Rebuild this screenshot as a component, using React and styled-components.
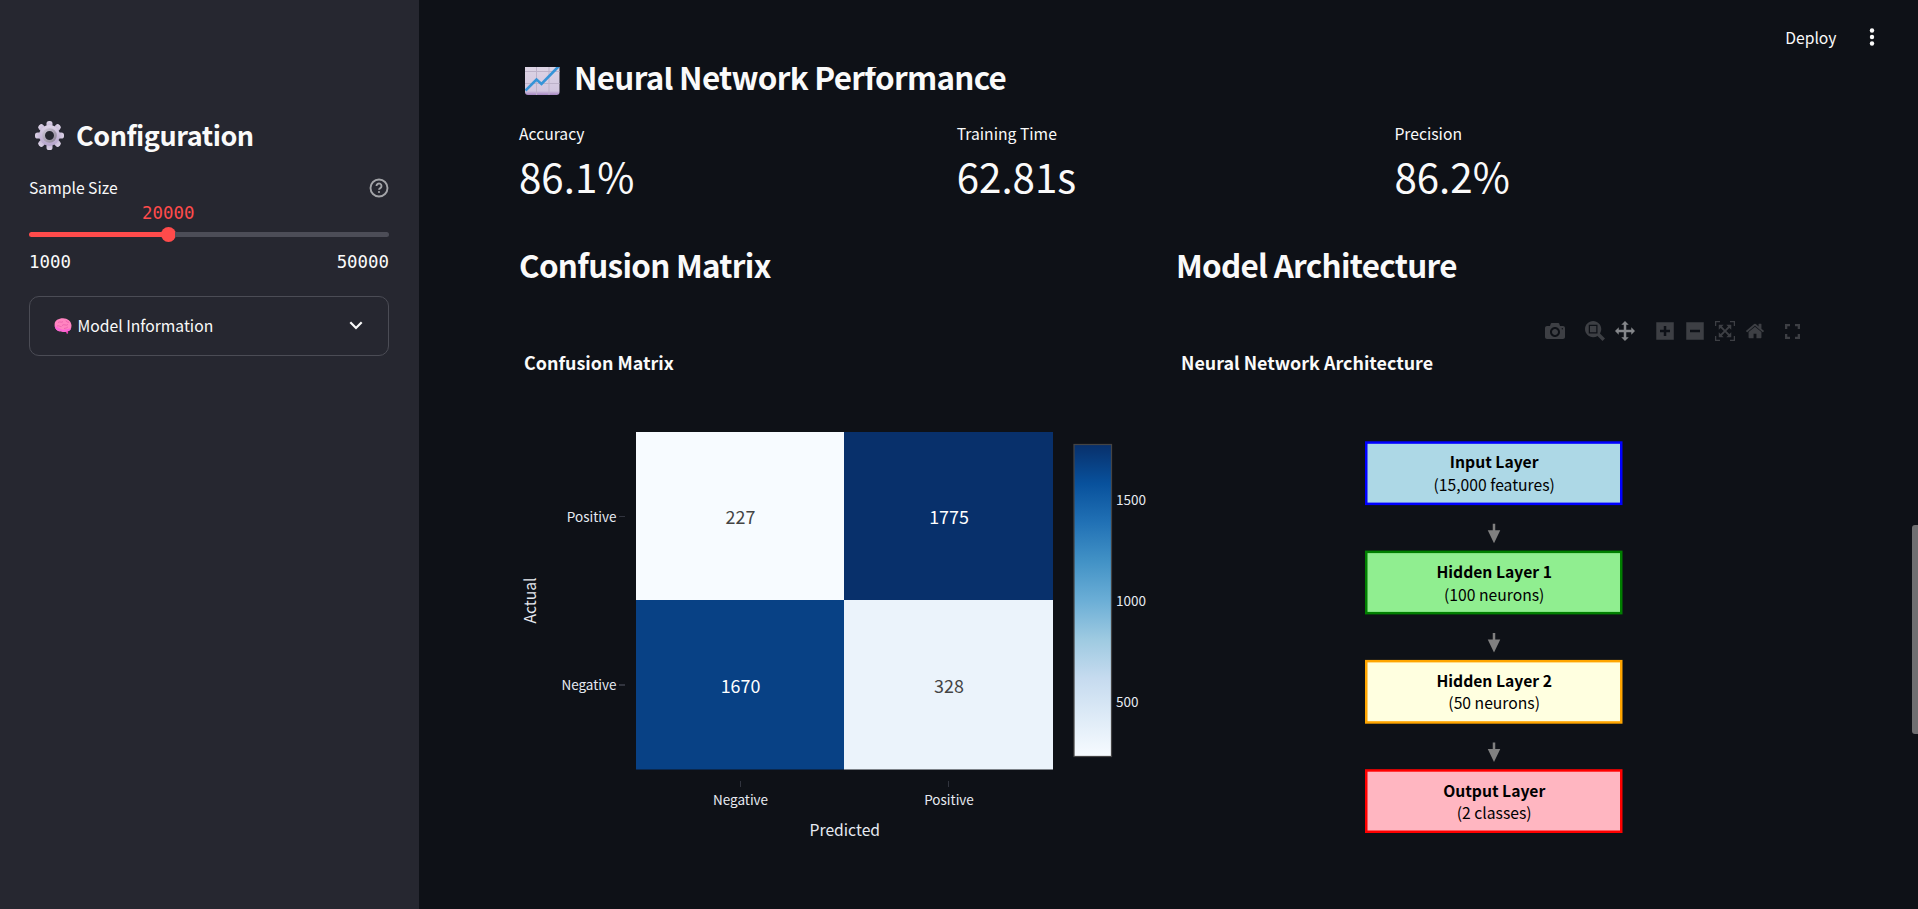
import React from "react";
import styled, { createGlobalStyle } from "styled-components";

const sans = `"Noto Sans CJK SC", "Noto Sans", sans-serif`;
const mono = `"DejaVu Sans Mono", monospace`;

const Global = createGlobalStyle`
  * { box-sizing: border-box; }
  body { margin: 0; background: #0e1117; color: #fafafa; font-family: ${sans}; overflow: hidden; }
  h1, h2, h3, p { margin: 0; }
`;

const Page = styled.div`
  display: flex;
  width: 1918px;
  height: 909px;
  overflow: hidden;
  position: relative;
`;

const Sidebar = styled.aside`
  width: 419px;
  flex: none;
  background: #262730;
  padding: 115px 30px 0 29px;
`;

const SideTitle = styled.h2`
  display: flex;
  align-items: center;
  height: 40px;
  padding-left: 6px;
  gap: 12px;
  font-size: 27px;
  font-weight: 700;
  line-height: 40px;
  letter-spacing: -0.46px;
  white-space: nowrap;
`;

const LabelRow = styled.div`
  display: flex;
  justify-content: space-between;
  align-items: center;
  height: 24px;
  margin-top: 20px;
  font-size: 15.7px;
  svg { margin-top: 1px; }
`;

const Slider = styled.div`
  display: flex;
  align-items: center;
  height: 16px;
  margin-top: 2px;
`;

const SliderValue = styled.div`
  margin: 3px 0 0 113px;
  font: 17.4px/22px ${mono};
  color: #ff4b4b;
`;

const Filled = styled.div`
  width: 133px;
  height: 5px;
  border-radius: 3px 0 0 3px;
  background: #ff4b4b;
`;

const Thumb = styled.div`
  width: 15px;
  height: 15px;
  border-radius: 50%;
  margin: 0 -1px;
  background: #ff4b4b;
`;

const Rest = styled.div`
  flex: 1;
  height: 5px;
  border-radius: 0 3px 3px 0;
  background: #4c4d57;
`;

const Range = styled.div`
  display: flex;
  justify-content: space-between;
  margin-top: 9px;
  font: 17.4px/22px ${mono};
`;

const Expander = styled.div`
  display: flex;
  align-items: center;
  height: 60px;
  margin-top: 23px;
  padding: 0 25.5px 1px 23.5px;
  border: 1px solid #4b4c55;
  border-radius: 10px;
  font-size: 15.7px;
  gap: 6px;
  svg:last-child { margin-left: auto; }
`;

const Header = styled.header`
  position: absolute;
  top: 0;
  left: 419px;
  right: 0;
  height: 67px;
  background: #0e1117;
  display: flex;
  justify-content: flex-end;
  align-items: center;
  gap: 32px;
  padding: 7px 43.5px 0 0;
  font-size: 15.7px;
`;

const Main = styled.main`
  flex: 1;
  padding: 52px 85px 0 100px;
`;

const Heading = styled.h3`
  display: flex;
  align-items: center;
  gap: 14px;
  height: 50px;
  padding-left: ${(p) => (p.$icon ? 6 : 0)}px;
  font-size: 31.4px;
  line-height: 50px;
  font-weight: 700;
  white-space: nowrap;
  letter-spacing: -0.7px;
  svg { margin-top: 2px; }
`;

const Metrics = styled.section`
  display: flex;
  margin-top: 20px;
`;

const Metric = styled.div`
  width: 437.7px;
`;

const MetricLabel = styled.p`
  font-size: 15.7px;
  line-height: 24px;
`;

const MetricValue = styled.p`
  font-size: 40.3px;
  line-height: 56px;
  margin: 2px 0 1px;
`;

const Columns = styled.section`
  display: flex;
  margin-top: 35px;
`;

const Column = styled.div`
  width: 657px;
  flex: none;
`;

const Chart = styled.svg`
  display: block;
  font-family: ${sans};
`;

const MatrixArea = styled.div`
  padding-top: 35px;
`;

const Scrollbar = styled.div`
  position: absolute;
  right: 0;
  top: 525px;
  width: 6px;
  height: 209px;
  border-radius: 3px 0 0 3px;
  background: #6f6f71;
`;

const Gear = () => (
  <svg width="29" height="29" viewBox="-14.5 -14.5 29 29">
    <defs>
      <linearGradient id="gear" x1="0" y1="0" x2="0" y2="1">
        <stop offset="0" stopColor="#dcd3e6" />
        <stop offset="1" stopColor="#b6a4cc" />
      </linearGradient>
      <linearGradient id="ring" x1="0" y1="0" x2="1" y2="1">
        <stop offset="0" stopColor="#c9c2d2" />
        <stop offset="1" stopColor="#8f8698" />
      </linearGradient>
    </defs>
    <g fill="url(#gear)">
      {[0, 45, 90, 135, 180, 225, 270, 315].map((a) => (
        <rect key={a} x="-3" y="-14.5" width="6" height="9" rx="2.6" transform={`rotate(${a})`} />
      ))}
      <circle r="10.4" />
    </g>
    <circle r="5.9" fill="#262730" stroke="url(#ring)" strokeWidth="2.8" />
  </svg>
);

const Brain = () => (
  <svg width="18" height="16" viewBox="0 0 18 16">
    <path d="M11.500 12l1 3.600 1.500.1.300-4z" fill="#e93fb4" />
    <path d="M.6 6.500C.6 2.500 4.500.3 9 .3s8.400 3 8.500 7.200c0 3.500-1.500 5.600-4.300 5.600-1.800 1.200-4.700 1-6.200.1C3.500 13.700.6 11 .6 6.500z" fill="#ff84c0" />
    <path d="M.7 7.500c1.500 2 4 1.500 6 3.500 2.500 1.500 5 0 10.500-.500-.6 1.700-1.900 2.600-4 2.600-1.800 1.200-4.700 1-6.200.1C3.500 13.700.8 11 .7 7.500z" fill="#fb66d4" />
    <path d="M4 4.500c2-1.500 3 .5 5-.8M8 7.500c2-2 4 .8 6-1M3 8c2-.8 3 1 4.500.6M10 10.500c2-.3 3-.6 4-1.800M12 2.500c0 1.500 2 1.500 3 2" fill="none" stroke="#e655a6" strokeWidth=".7" />
  </svg>
);

const Trend = () => (
  <svg width="35" height="34" viewBox="0 0 35 34">
    <defs>
      <linearGradient id="paper" x1="0" y1="0" x2="0" y2="1">
        <stop offset="0" stopColor="#dfd8e6" />
        <stop offset=".88" stopColor="#d2c6df" />
        <stop offset="1" stopColor="#a585c2" />
      </linearGradient>
    </defs>
    <rect width="34.500" height="34" rx="3" fill="url(#paper)" />
    <path d="M11.500 0v34M24 0v34M0 10.500h34.500M0 22.500h34.500" stroke="#bdb2c9" />
    <path d="M.5 29.500L11.500 18.500l5 4.500L34 5" fill="none" stroke="#3694d8" strokeWidth="2.600" />
  </svg>
);

const Help = () => (
  <svg width="20" height="20" viewBox="0 0 20 20" fill="none" stroke="#a3a4a8" strokeWidth="1.900">
    <circle cx="10" cy="10" r="8.500" />
    <path d="M7.500 8a2.500 2.500 0 1 1 3.800 2.100c-.9.55-1.300.9-1.300 1.700" />
    <circle cx="10" cy="14" r="1.100" fill="#a3a4a8" stroke="none" />
  </svg>
);

const blues = [
  "rgb(247,251,255)", "rgb(222,235,247)", "rgb(198,219,239)", "rgb(158,202,225)", "rgb(107,174,214)",
  "rgb(66,146,198)", "rgb(33,113,181)", "rgb(8,81,156)", "rgb(8,48,107)",
];

const cells = [
  { x: 117, y: 107, w: 208, h: 168, fill: "rgb(247,251,255)", value: 227, ink: "#444" },
  { x: 325, y: 107, w: 209, h: 168, fill: "rgb(8,48,107)", value: 1775, ink: "#fff" },
  { x: 117, y: 275, w: 208, h: 169.500, fill: "rgb(8,65,133)", value: 1670, ink: "#fff" },
  { x: 325, y: 275, w: 209, h: 169.500, fill: "rgb(235,243,251)", value: 328, ink: "#444" },
];

const Matrix = () => (
  <Chart width="657" height="584" viewBox="0 0 657 584" fill="#e6eaf1">
    <defs>
      <linearGradient id="blues" x1="0" y1="1" x2="0" y2="0">
        {blues.map((c, i) => <stop key={c} offset={i / 8} stopColor={c} />)}
      </linearGradient>
    </defs>
    <text x="5" y="45" fontSize="17.9" fontWeight="700" fill="#fafafa">Confusion Matrix</text>
    {cells.map((c) => (
      <g key={c.value}>
        <rect x={c.x} y={c.y} width={c.w} height={c.h} fill={c.fill} />
        <text x={c.x < 200 ? 221.500 : 430} y={c.y < 200 ? 199 : 368} fontSize="17.9" textAnchor="middle" fill={c.ink}>{c.value}</text>
      </g>
    ))}
    <g fontSize="13.5">
      <text x="97.500" y="197" textAnchor="end">Positive</text>
      <text x="97.500" y="365" textAnchor="end">Negative</text>
      <text x="221.500" y="480" textAnchor="middle">Negative</text>
      <text x="430" y="480" textAnchor="middle">Positive</text>
      <text x="597" y="180">1500</text>
      <text x="597" y="281">1000</text>
      <text x="597" y="382">500</text>
    </g>
    <path d="M100 191.500h6M221.500 456v6M429.500 456v6" stroke="#31343e" />
    <path d="M100 360h6" stroke="#31343e" strokeWidth="2" />
    <text x="325.800" y="511" fontSize="15.700" textAnchor="middle">Predicted</text>
    <text transform="translate(17 275.500) rotate(-90)" fontSize="15.700" textAnchor="middle">Actual</text>
    <rect x="555" y="119.500" width="37.500" height="312" fill="url(#blues)" stroke="#444" strokeWidth="1.250" />
  </Chart>
);

const layers = [
  { name: "Input Layer", size: "(15,000 features)", fill: "lightblue", line: "blue", base: 27, sub: 50 },
  { name: "Hidden Layer 1", size: "(100 neurons)", fill: "lightgreen", line: "green", base: 27.4, sub: 50.4 },
  { name: "Hidden Layer 2", size: "(50 neurons)", fill: "lightyellow", line: "orange", base: 27.1, sub: 49.5 },
  { name: "Output Layer", size: "(2 classes)", fill: "lightpink", line: "red", base: 27.8, sub: 49.8 },
];

const Network = () => (
  <Chart width="657" height="530" viewBox="0 0 657 530">
    <text x="5" y="15" fontSize="17.9" fontWeight="700" fill="#fafafa">Neural Network Architecture</text>
    {layers.map((l, i) => (
      <g key={l.name} transform={`translate(0 ${86.300 + i * 109.300})`} fontSize="15.700" textAnchor="middle">
        <rect x="190.250" y="1.250" width="255" height="61.300" fill={l.fill} stroke={l.line} strokeWidth="2.500" />
        <text x="318.200" y={l.base} fontWeight="700">{l.name}</text>
        <text x="318.200" y={l.sub}>{l.size}</text>
        {i < 3 && <path d="M316.750 82.500h2.500v6.500h5L318 102l-6.250-13h5z" fill="#808080" />}
      </g>
    ))}
  </Chart>
);

const Modebar = styled.div`
  display: flex;
  justify-content: flex-end;
  height: 65px;
  padding: 31px 30px 0 0;
`;

const ToolGroup = styled.div`
  display: flex;
  gap: 10px;
  margin-left: ${(p) => p.$lead ?? 20}px;
`;

const Tool = styled.svg`
  width: 20px;
  height: 20px;
  fill: ${(p) => (p.$active ? "#84868a" : "#3d3f44")};
`;

const tools = [
  [{ w: 1000, d: "m500 450c-83 0-150-67-150-150 0-83 67-150 150-150 83 0 150 67 150 150 0 83-67 150-150 150z m400 150h-120c-16 0-34 13-39 29l-31 93c-6 15-23 28-40 28h-340c-16 0-34-13-39-28l-31-94c-6-15-23-28-40-28h-120c-55 0-100-45-100-100v-450c0-55 45-100 100-100h800c55 0 100 45 100 100v450c0 55-45 100-100 100z m-400-550c-138 0-250 112-250 250 0 138 112 250 250 250 138 0 250-112 250-250 0-138-112-250-250-250z m365 380c-19 0-35 16-35 35 0 19 16 35 35 35 19 0 35-16 35-35 0-19-16-35-35-35z" }],
  [
    { w: 1000, d: "m1000-25l-250 251c40 63 63 138 63 218 0 224-182 406-407 406-224 0-406-182-406-406s183-406 407-406c80 0 155 22 218 62l250-250 125 125z m-812 250l0 438 437 0 0-438-437 0z m62 375l313 0 0-312-313 0 0 312z" },
    { w: 1000, active: true, d: "m1000 350l-187 188 0-125-250 0 0 250 125 0-188 187-187-187 125 0 0-250-250 0 0 125-188-188 186-187 0 125 252 0 0-250-125 0 187-188 188 188-125 0 0 250 250 0 0-126 187 188z" },
  ],
  [
    { w: 875, d: "m1 787l0-875 875 0 0 875-875 0z m687-500l-187 0 0-187-125 0 0 187-188 0 0 125 188 0 0 187 125 0 0-187 187 0 0-125z" },
    { w: 875, d: "m0 788l0-876 875 0 0 876-875 0z m688-500l-500 0 0 125 500 0 0-125z" },
    { w: 1000, d: "m250 850l-187 0-63 0 0-62 0-188 63 0 0 188 187 0 0 62z m688 0l-188 0 0-62 188 0 0-188 62 0 0 188 0 62-62 0z m-875-938l0 188-63 0 0-188 0-62 63 0 187 0 0 62-187 0z m875 188l0-188-188 0 0-62 188 0 62 0 0 62 0 188-62 0z m-125 188l-1 0-93-94-156 156 156 156 92-93 2 0 0 250-250 0 0-2 93-92-156-156-156 156 94 92 0 2-250 0 0-250 0 0 93 93 157-156-157-156-93 94 0 0 0-250 250 0 0 0-94 93 156 157 156-157-93-93 0 0 250 0 0 250z" },
    { w: 928.6, d: "m786 296v-267q0-15-11-26t-25-10h-214v214h-143v-214h-214q-15 0-25 10t-11 26v267q0 1 0 2t0 2l321 264 321-264q1-1 1-4z m124 39l-34-41q-5-5-12-6h-2q-7 0-12 3l-386 322-386-322q-7-4-13-4-7 2-12 7l-35 41q-4 5-3 13t6 12l401 334q18 15 42 15t43-15l136-114v109q0 8 5 13t13 5h107q8 0 13-5t5-13v-227l122-102q5-5 6-12t-4-13z" },
  ],
];

export default function App() {
  return (
    <Page>
      <Global />
      <Sidebar>
        <SideTitle><Gear />Configuration</SideTitle>
        <LabelRow><span>Sample Size</span><Help /></LabelRow>
        <SliderValue>20000</SliderValue>
        <Slider><Filled /><Thumb /><Rest /></Slider>
        <Range><span>1000</span><span>50000</span></Range>
        <Expander>
          <Brain />
          <span>Model Information</span>
          <svg width="14" height="9" viewBox="0 0 14 9" fill="none" stroke="#fafafa" strokeWidth="2.200"><path d="M1.300 1.300L7 7l5.700-5.700" /></svg>
        </Expander>
      </Sidebar>
      <Main>
        <Heading $icon><Trend />Neural Network Performance</Heading>
        <Metrics>
          <Metric><MetricLabel>Accuracy</MetricLabel><MetricValue>86.1%</MetricValue></Metric>
          <Metric><MetricLabel>Training Time</MetricLabel><MetricValue>62.81s</MetricValue></Metric>
          <Metric><MetricLabel>Precision</MetricLabel><MetricValue>86.2%</MetricValue></Metric>
        </Metrics>
        <Columns>
          <Column>
            <Heading>Confusion Matrix</Heading>
            <MatrixArea><Matrix /></MatrixArea>
          </Column>
          <Column>
            <Heading>Model Architecture</Heading>
            <Modebar>
              {tools.map((group, i) => (
                <ToolGroup key={i}>
                  {group.map((t) => (
                    <Tool key={t.d} viewBox={`0 0 ${t.w} 1000`} $active={t.active}>
                      <path d={t.d} transform="matrix(1 0 0 -1 0 850)" />
                    </Tool>
                  ))}
                </ToolGroup>
              ))}
              <ToolGroup $lead={18}>
                <Tool viewBox="0 0 20 20">
                  <path d="M2 3h5v2.300H4.300V8H2zM12 3h5v5h-2.300V5.300H12zM2 13h2.300v2.700H7V18H2zM14.700 13H17v5h-5v-2.300h2.700z" />
                </Tool>
              </ToolGroup>
            </Modebar>
            <Network />
          </Column>
        </Columns>
      </Main>
      <Header>
        <span>Deploy</span>
        <svg width="6" height="18" viewBox="0 0 6 18" fill="#fafafa"><circle cx="3" cy="2.500" r="2.200" /><circle cx="3" cy="9" r="2.200" /><circle cx="3" cy="15.500" r="2.200" /></svg>
      </Header>
      <Scrollbar />
    </Page>
  );
}
